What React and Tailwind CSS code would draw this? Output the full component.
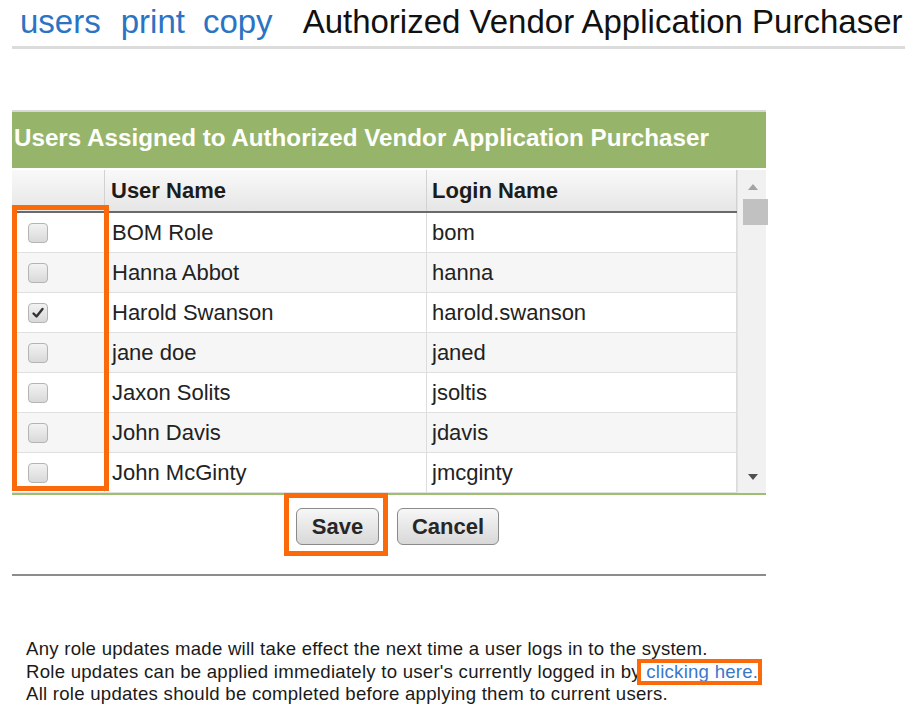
import { useState } from "react";

const users = [
  { name: "BOM Role", login: "bom", checked: false },
  { name: "Hanna Abbot", login: "hanna", checked: false },
  { name: "Harold Swanson", login: "harold.swanson", checked: true },
  { name: "jane doe", login: "janed", checked: false },
  { name: "Jaxon Solits", login: "jsoltis", checked: false },
  { name: "John Davis", login: "jdavis", checked: false },
  { name: "John McGinty", login: "jmcginty", checked: false },
];

function Check({ checked, onClick }) {
  return (
    <button
      onClick={onClick}
      className="w-[20px] h-[20px] rounded-[4px] border border-[#b4b4b4] bg-gradient-to-b from-[#f2f2f2] to-[#d9d9d9] flex items-center justify-center"
    >
      {checked && (
        <svg width="14" height="14" viewBox="0 0 14 14">
          <path d="M2.5 7.5 L5.5 10.5 L11.5 3" fill="none" stroke="#333" strokeWidth="2.4" strokeLinecap="round" strokeLinejoin="round" />
        </svg>
      )}
    </button>
  );
}

export default function App() {
  const [rows, setRows] = useState(users);

  const toggle = (i) => {
    setRows(rows.map((r, j) => (j === i ? { ...r, checked: !r.checked } : r)));
  };

  return (
    <div className="w-[917px] h-[713px] bg-white font-['Liberation_Sans',Arial,sans-serif] text-[#222] overflow-hidden">
      {/* top bar */}
      <div className="mx-[12px] w-[893px] border-b-[3px] border-[#dcdcdc] pt-[2px] h-[49px] flex items-start text-[33px] leading-[40px]">
        <a className="ml-[8px] text-[#2b74c4]">users</a>
        <a className="ml-[20px] text-[#2b74c4]">print</a>
        <a className="ml-[18px] text-[#2b74c4]">copy</a>
        <span className="ml-[30px] text-[#111]">Authorized Vendor Application Purchaser</span>
      </div>

      {/* assigned users panel */}
      <div className="relative ml-[12px] mt-[61px] w-[754px]">
        <div className="h-[58px] bg-[#97b56a] border-t-2 border-[#d8d8d8] flex items-center">
          <span className="ml-[2px] -mt-[4px] text-white font-bold text-[24.2px] leading-none">
            Users Assigned to Authorized Vendor Application Purchaser
          </span>
        </div>

        <div className="flex mt-[2px] border-b-2 border-[#9cc070]">
          <div className="w-[725px]">
            <div className="flex h-[43px] bg-gradient-to-b from-[#f9f9f9] to-[#e6e6e6] border-b-2 border-[#6a6a6a] text-[22px] font-bold text-[#1c1c1c]">
              <div className="w-[93px] border-r border-[#d2d2d2]" />
              <div className="w-[322px] border-r border-[#d2d2d2] pl-[6px] flex items-center">User Name</div>
              <div className="w-[310px] border-r border-[#d2d2d2] pl-[5px] flex items-center">Login Name</div>
            </div>
            {rows.map((r, i) => (
              <div
                key={r.login}
                className={`flex h-[40px] border-b border-[#e0e0e0] text-[22px] ${i % 2 === 1 ? "bg-[#f6f6f6]" : "bg-white"}`}
              >
                <div className="w-[93px] border-r border-[#dcdcdc] flex items-center pl-[16px]">
                  <Check checked={r.checked} onClick={() => toggle(i)} />
                </div>
                <div className="w-[322px] border-r border-[#dcdcdc] pl-[7px] flex items-center">{r.name}</div>
                <div className="w-[310px] border-r border-[#dcdcdc] pl-[5px] flex items-center">{r.login}</div>
              </div>
            ))}
          </div>
          <div className="w-[29px] bg-[#f1f1f1] border-l border-[#e2e2e2] flex flex-col items-center">
            <svg className="mt-[13px] ml-[1px]" width="12" height="8" viewBox="0 0 12 8">
              <path d="M6 1 L11 7 L1 7 Z" fill="#a3a3a3" />
            </svg>
            <div className="mt-[8px] ml-[6px] w-[25px] h-[26px] bg-[#c1c1c1]" />
            <div className="flex-1" />
            <svg className="mb-[12px] ml-[1px]" width="12" height="8" viewBox="0 0 12 8">
              <path d="M1 1 L11 1 L6 7 Z" fill="#505050" />
            </svg>
          </div>
        </div>

        {/* highlight around checkbox column */}
        <div className="absolute left-0 top-[95px] w-[97px] h-[286px] border-[5px] border-[#fa6a0a] pointer-events-none" />

        <div className="flex justify-center gap-[18px] pt-[13px] pb-[29px] border-b-2 border-[#8c8c8c] pl-[17px]">
          <div className="relative">
            <button className="w-[83px] h-[37px] rounded-[6px] border border-[#8a8a8a] bg-gradient-to-b from-[#f7f7f7] to-[#d8d8d8] text-[22px] font-bold text-[#262626]">
              Save
            </button>
            <div className="absolute -left-[12px] -top-[15px] w-[104px] h-[63px] border-[5px] border-[#fa6a0a] pointer-events-none" />
          </div>
          <button className="w-[102px] h-[37px] rounded-[6px] border border-[#8a8a8a] bg-gradient-to-b from-[#f7f7f7] to-[#d8d8d8] text-[22px] font-bold text-[#262626]">
            Cancel
          </button>
        </div>
      </div>

      {/* notes */}
      <div className="ml-[26px] mt-[62px] text-[18.6px] tracking-[0.25px] leading-[22.5px] text-[#1a1a1a]">
        <p>Any role updates made will take effect the next time a user logs in to the system.</p>
        <p>
          Role updates can be applied immediately to user's currently logged in by{" "}
          <span className="relative text-[#3a78cc]">
            clicking here.
            <span className="absolute -left-[9px] -right-[4px] -top-[2px] -bottom-[3px] border-[4px] border-[#fa6a0a] pointer-events-none" />
          </span>
        </p>
        <p>All role updates should be completed before applying them to current users.</p>
      </div>
    </div>
  );
}
